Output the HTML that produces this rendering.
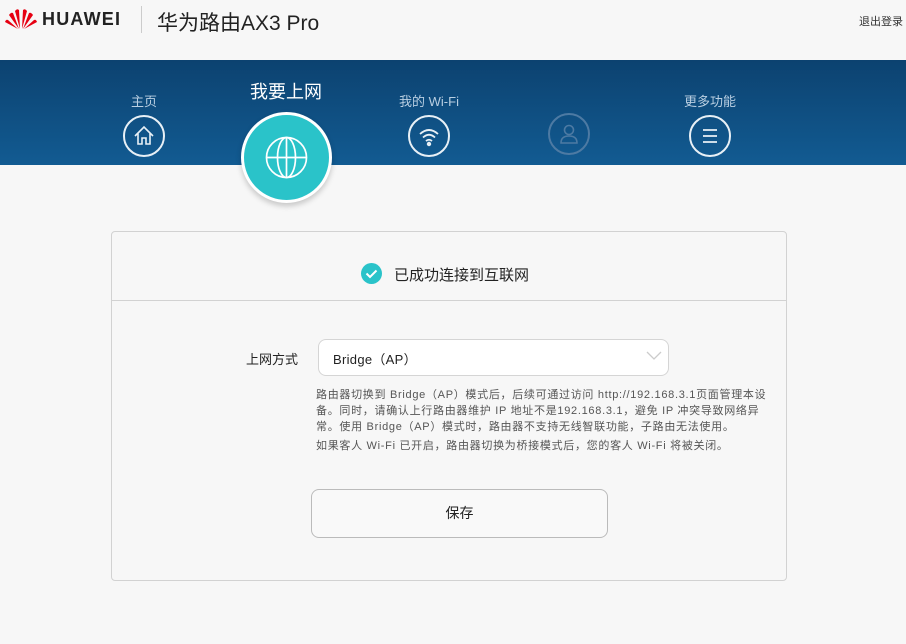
<!DOCTYPE html>
<html><head><meta charset="utf-8"><style>
*{margin:0;padding:0;box-sizing:border-box}
body{width:906px;height:644px;background:#f7f7f7;font-family:"Liberation Sans","Noto Sans CJK SC",sans-serif;position:relative;overflow:hidden;color:#333}
.a{position:absolute}
.nav{left:0;top:60px;width:906px;height:105px;background:linear-gradient(180deg,#0c4270,#125b92)}
.lbl{color:#b9cfe2;font-size:13px;transform:translateX(-50%);white-space:nowrap}
.ic{width:42px;height:42px;border:2px solid #e8f0f6;border-radius:50%;transform:translate(-50%,-50%)}
.d{position:absolute;left:316px;font-size:11px;color:#555;white-space:nowrap;letter-spacing:.7px}
</style></head><body>
<svg class="a" style="left:5px;top:8px" width="32" height="22" viewBox="0 0 32 22"><g fill="#e60012"><path d="M15 21 L10 3 Q12 0 14 2Z"/><path d="M17 21 L22 3 Q20 0 18 2Z"/><path d="M14 21 L4 7 Q6 4 8 5Z"/><path d="M18 21 L28 7 Q26 4 24 5Z"/><path d="M13 21 L0 14 Q1 11 3 12Z"/><path d="M19 21 L32 14 Q31 11 29 12Z"/></g></svg>
<div class="a" style="left:42px;top:9px;font-size:18px;font-weight:bold;color:#222;letter-spacing:1.2px">HUAWEI</div>
<div class="a" style="left:141px;top:6px;width:1px;height:27px;background:#ccc"></div>
<div class="a" style="left:157px;top:7px;font-size:21px;color:#222">华为路由AX3 Pro</div>
<div class="a" style="left:859px;top:13px;font-size:11px;color:#333">退出登录</div>
<div class="a nav"></div>
<div class="a lbl" style="left:144px;top:91px">主页</div>
<div class="a lbl" style="left:286px;top:78px;font-size:18px;color:#fff">我要上网</div>
<div class="a lbl" style="left:429px;top:91px">我的 Wi-Fi</div>
<div class="a lbl" style="left:710px;top:91px">更多功能</div>
<div class="a ic" style="left:144px;top:136px"><svg width="38" height="38" viewBox="0 0 38 38" fill="none" stroke="#e8f0f6" stroke-width="1.6"><path d="M10 19 L19 10 L28 19 M13 16 V27 H17 V21 H21 V27 H25 V16"/></svg></div>
<div class="a ic" style="left:429px;top:136px"><svg width="38" height="38" viewBox="0 0 38 38" fill="none" stroke="#e8f0f6" stroke-width="1.8"><path d="M10 17 Q19 9 28 17 M13 20.5 Q19 15 25 20.5 M16 24 Q19 21.5 22 24"/><circle cx="19" cy="27" r="1.3" fill="#e8f0f6"/></svg></div>
<div class="a ic" style="left:569px;top:134px;border-color:#4d7aa3"><svg width="38" height="38" viewBox="0 0 38 38" fill="none" stroke="#4d7aa3" stroke-width="1.6"><circle cx="19" cy="15" r="4.5"/><path d="M11 28 Q11 21 19 21 Q27 21 27 28Z"/></svg></div>
<div class="a ic" style="left:710px;top:136px"><svg width="38" height="38" viewBox="0 0 38 38" stroke="#e8f0f6" stroke-width="1.8"><path d="M12 13H26M12 19H26M12 25H26"/></svg></div>
<div class="a" style="left:241px;top:112px;width:91px;height:91px;border-radius:50%;background:#2ac3c9;border:3px solid #fff;box-shadow:0 3px 6px rgba(0,0,0,.2)"><svg style="position:absolute;left:20px;top:20px" width="45" height="45" viewBox="0 0 45 45" fill="none" stroke="#fff" stroke-width="1.7"><circle cx="22.5" cy="22.5" r="20"/><ellipse cx="22.5" cy="22.5" rx="9" ry="20"/><path d="M22.5 2.5V42.5M2.5 22.5H42.5"/></svg></div>
<div class="a" style="left:111px;top:231px;width:676px;height:350px;border:1px solid #d2d2d2;border-radius:4px;background:#f7f7f7"></div>
<div class="a" style="left:112px;top:300px;width:674px;height:1px;background:#d2d2d2"></div>
<svg class="a" style="left:361px;top:263px" width="21" height="21" viewBox="0 0 21 21"><circle cx="10.5" cy="10.5" r="10.5" fill="#2ac3c9"/><path d="M5.5 10.5 L9 14 L15.5 7.5" stroke="#fff" stroke-width="2" fill="none"/></svg>
<div class="a" style="left:394px;top:264px;font-size:15px;color:#222">已成功连接到互联网</div>
<div class="a" style="left:246px;top:349px;font-size:13px;color:#222">上网方式</div>
<div class="a" style="left:318px;top:339px;width:351px;height:37px;background:#fff;border:1px solid #d5d5d5;border-radius:8px"></div>
<div class="a" style="left:333px;top:349px;font-size:13px;color:#222;letter-spacing:.3px">Bridge（AP）</div>
<svg class="a" style="left:645px;top:350px" width="18" height="12" viewBox="0 0 18 12"><path d="M2 2 L9 9 L16 2" stroke="#ccc" stroke-width="1.3" fill="none"/></svg>
<div class="d" style="top:386px">路由器切换到 Bridge（AP）模式后，后续可通过访问 http://192.168.3.1页面管理本设</div>
<div class="d" style="top:402px">备。同时，请确认上行路由器维护 IP 地址不是192.168.3.1，避免 IP 冲突导致网络异</div>
<div class="d" style="top:418px">常。使用 Bridge（AP）模式时，路由器不支持无线智联功能，子路由无法使用。</div>
<div class="d" style="top:437px">如果客人 Wi-Fi 已开启，路由器切换为桥接模式后，您的客人 Wi-Fi 将被关闭。</div>
<div class="a" style="left:311px;top:489px;width:297px;height:49px;border:1px solid #bbb;border-radius:8px;background:#f9f9f9;text-align:center;line-height:47px;font-size:14px;color:#222">保存</div>
</body></html>
